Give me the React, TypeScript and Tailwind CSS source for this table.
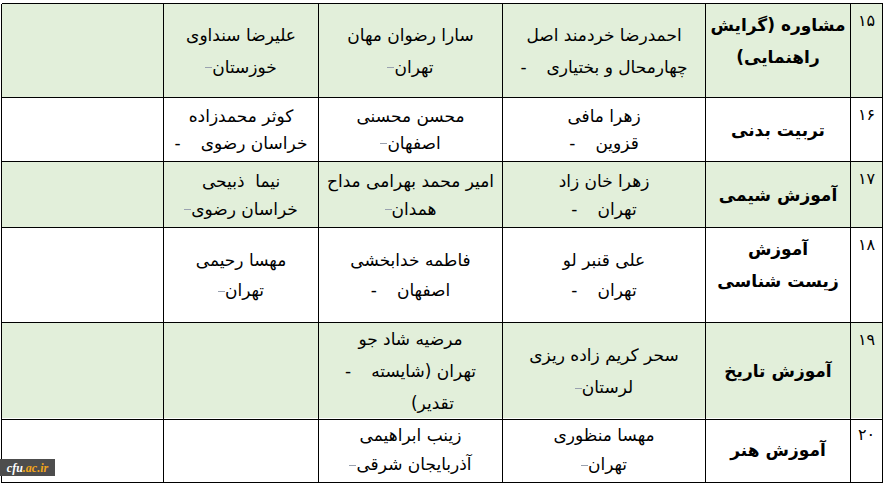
type Cell = { l1: string; l2?: string; l3?: string; dash?: 'thin' | 'wide' } | null;

type Row = {
  num: string;
  subject: string[];
  cells: Cell[];
  h: string;
  lh: string;
  green: boolean;
};

const rows: Row[] = [
  {
    num: '۱۵',
    subject: ['مشاوره (گرایش', 'راهنمایی)'],
    cells: [
      { l1: 'احمدرضا خردمند اصل', l2: 'چهارمحال و بختیاری', dash: 'wide' },
      { l1: 'سارا رضوان مهان', l2: 'تهران', dash: 'thin' },
      { l1: 'علیرضا سنداوی', l2: 'خوزستان', dash: 'thin' },
      null,
    ],
    h: 'h-[94px]',
    lh: 'leading-[32px]',
    green: true,
  },
  {
    num: '۱۶',
    subject: ['تربیت بدنی'],
    cells: [
      { l1: 'زهرا مافی', l2: 'قزوین', dash: 'wide' },
      { l1: 'محسن محسنی', l2: 'اصفهان', dash: 'thin' },
      { l1: 'کوثر محمدزاده', l2: 'خراسان رضوی', dash: 'wide' },
      null,
    ],
    h: 'h-[64px]',
    lh: 'leading-[27px]',
    green: false,
  },
  {
    num: '۱۷',
    subject: ['آموزش شیمی'],
    cells: [
      { l1: 'زهرا خان زاد', l2: 'تهران', dash: 'wide' },
      { l1: 'امیر محمد بهرامی مداح', l2: 'همدان', dash: 'thin' },
      { l1: 'نیما\u00a0 ذبیحی', l2: 'خراسان رضوی', dash: 'thin' },
      null,
    ],
    h: 'h-[66px]',
    lh: 'leading-[28px]',
    green: true,
  },
  {
    num: '۱۸',
    subject: ['آموزش', 'زیست شناسی'],
    cells: [
      { l1: 'علی قنبر لو', l2: 'تهران', dash: 'wide' },
      { l1: 'فاطمه خدابخشی', l2: 'اصفهان', dash: 'wide' },
      { l1: 'مهسا رحیمی', l2: 'تهران', dash: 'thin' },
      null,
    ],
    h: 'h-[95px]',
    lh: 'leading-[30px]',
    green: false,
  },
  {
    num: '۱۹',
    subject: ['آموزش تاریخ'],
    cells: [
      { l1: 'سحر کریم زاده ریزی', l2: 'لرستان', dash: 'thin' },
      { l1: 'مرضیه شاد جو', l2: 'تهران (شایسته', l3: 'تقدیر)', dash: 'wide' },
      null,
      null,
    ],
    h: 'h-[95px]',
    lh: 'leading-[32px]',
    green: true,
  },
  {
    num: '۲۰',
    subject: ['آموزش هنر'],
    cells: [
      { l1: 'مهسا منظوری', l2: 'تهران', dash: 'thin' },
      { l1: 'زینب ابراهیمی', l2: 'آذربایجان شرقی', dash: 'thin' },
      null,
      null,
    ],
    h: 'h-[65px]',
    lh: 'leading-[29px]',
    green: false,
  },
];

function Dash({ kind }: { kind?: 'thin' | 'wide' }) {
  if (kind === 'wide') return <span className="mr-5">-</span>;
  if (kind === 'thin') return <span className="inline-block w-[7px] h-px bg-gray-400 align-middle" />;
  return null;
}

function NameCell({ cell, lh }: { cell: Cell; lh: string }) {
  if (!cell) return <div />;
  return (
    <div className={`flex flex-col items-center justify-center text-[17px] text-black ${lh}`}>
      <div>{cell.l1}</div>
      <div>
        {cell.l2}
        <Dash kind={cell.dash} />
      </div>
      {cell.l3 && <div className="self-start mr-[22px]">{cell.l3}</div>}
    </div>
  );
}

export default function App() {
  return (
    <div className="w-[886px] h-[485px] bg-white pt-[3px] pl-[2px] relative" style={{ fontFamily: '"DejaVu Sans", sans-serif' }}>
      <div dir="rtl" className="w-[881px] border-t border-r border-black">
        {rows.map((row) => (
          <div
            key={row.num}
            className={`grid grid-cols-[32px_145px_203px_184px_155px_162px] ${row.h} ${row.green ? 'bg-[#e2efda]' : 'bg-white'}`}
          >
            <div className="border-l border-b border-black text-[16px] text-center pt-[5px]">{row.num}</div>
            <div
              className={`border-l border-b border-black flex flex-col items-center justify-center font-bold text-[17px] leading-[32px] ${row.subject.length > 1 ? 'pb-5' : ''}`}
            >
              {row.subject.map((s) => (
                <div key={s}>{s}</div>
              ))}
            </div>
            {row.cells.map((c, i) => (
              <div key={i} className="border-l border-b border-black flex">
                <div className="flex-1 flex items-center justify-center">
                  <NameCell cell={c} lh={row.lh} />
                </div>
              </div>
            ))}
          </div>
        ))}
      </div>
      <div className="absolute left-0 top-[459px] w-[55px] h-[17px] bg-[#4d4d4d] flex items-center justify-center italic font-bold text-[12px] leading-none" style={{ fontFamily: '"Liberation Serif", serif' }}>
        <span className="text-white">cfu</span>
        <span className="text-[#f2a51a]">.ac.ir</span>
      </div>
    </div>
  );
}
